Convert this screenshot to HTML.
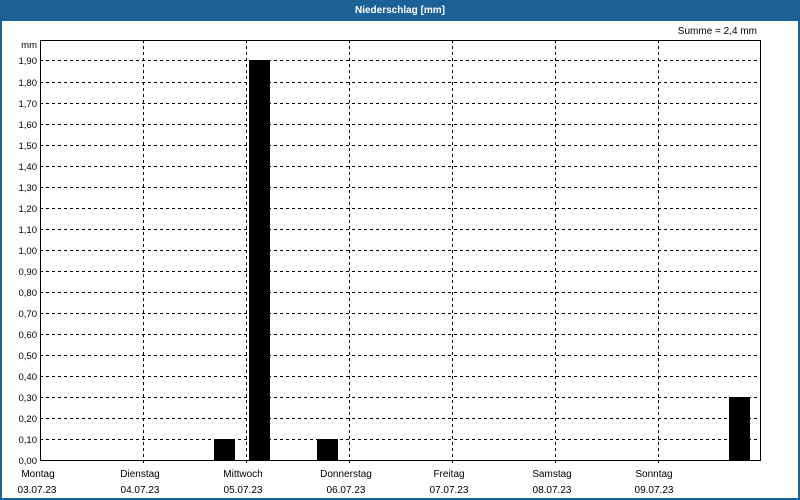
<!DOCTYPE html>
<html><head><meta charset="utf-8"><style>
html,body{margin:0;padding:0;background:#fff;}
body{width:800px;height:500px;overflow:hidden;position:relative;font-family:"Liberation Sans",sans-serif;}
</style></head><body>
<svg width="800" height="500" xmlns="http://www.w3.org/2000/svg" style="position:absolute;left:0;top:0">
<rect x="0" y="0" width="800" height="500" fill="#1d6297"/>
<rect x="2" y="21" width="796" height="477" fill="#fdfffd"/>
<text x="400" y="13" fill="#fff" font-size="10" font-weight="bold" text-anchor="middle" font-family="Liberation Sans, sans-serif">Niederschlag [mm]</text>
<text x="757" y="34" fill="#000" font-size="10" text-anchor="end" font-family="Liberation Sans, sans-serif">Summe = 2,4 mm</text>
<g stroke="#000" stroke-width="1" stroke-dasharray="3,3">
<line x1="40" x2="760" y1="439.5" y2="439.5"/>
<line x1="40" x2="760" y1="418.5" y2="418.5"/>
<line x1="40" x2="760" y1="397.5" y2="397.5"/>
<line x1="40" x2="760" y1="376.5" y2="376.5"/>
<line x1="40" x2="760" y1="355.5" y2="355.5"/>
<line x1="40" x2="760" y1="334.5" y2="334.5"/>
<line x1="40" x2="760" y1="313.5" y2="313.5"/>
<line x1="40" x2="760" y1="292.5" y2="292.5"/>
<line x1="40" x2="760" y1="271.5" y2="271.5"/>
<line x1="40" x2="760" y1="250.5" y2="250.5"/>
<line x1="40" x2="760" y1="229.5" y2="229.5"/>
<line x1="40" x2="760" y1="208.5" y2="208.5"/>
<line x1="40" x2="760" y1="187.5" y2="187.5"/>
<line x1="40" x2="760" y1="166.5" y2="166.5"/>
<line x1="40" x2="760" y1="145.5" y2="145.5"/>
<line x1="40" x2="760" y1="124.5" y2="124.5"/>
<line x1="40" x2="760" y1="103.5" y2="103.5"/>
<line x1="40" x2="760" y1="82.5" y2="82.5"/>
<line x1="40" x2="760" y1="60.5" y2="60.5"/>
<line y1="40" y2="463" x1="143.5" x2="143.5"/>
<line y1="40" y2="463" x1="246.5" x2="246.5"/>
<line y1="40" y2="463" x1="349.5" x2="349.5"/>
<line y1="40" y2="463" x1="452.5" x2="452.5"/>
<line y1="40" y2="463" x1="555.5" x2="555.5"/>
<line y1="40" y2="463" x1="658.5" x2="658.5"/>
</g>
<g fill="#000">
<rect x="214" y="439" width="21" height="21"/>
<rect x="249" y="60" width="21" height="400"/>
<rect x="317" y="439" width="21" height="21"/>
<rect x="729" y="397" width="21" height="63"/>
</g>
<path d="M40.5 40.5 H760.5 V460.5 H40.5 Z" fill="none" stroke="#000" stroke-width="1"/>
<g font-size="9.5" fill="#000" text-anchor="end" font-family="Liberation Sans, sans-serif">
<text x="37" y="48">mm</text>
<text x="37" y="464">0,00</text>
<text x="37" y="443">0,10</text>
<text x="37" y="422">0,20</text>
<text x="37" y="401">0,30</text>
<text x="37" y="380">0,40</text>
<text x="37" y="359">0,50</text>
<text x="37" y="338">0,60</text>
<text x="37" y="317">0,70</text>
<text x="37" y="296">0,80</text>
<text x="37" y="275">0,90</text>
<text x="37" y="254">1,00</text>
<text x="37" y="233">1,10</text>
<text x="37" y="212">1,20</text>
<text x="37" y="191">1,30</text>
<text x="37" y="170">1,40</text>
<text x="37" y="149">1,50</text>
<text x="37" y="128">1,60</text>
<text x="37" y="107">1,70</text>
<text x="37" y="86">1,80</text>
<text x="37" y="64">1,90</text>
</g>
<g font-size="10" fill="#000" text-anchor="middle" font-family="Liberation Sans, sans-serif">
<text x="38" y="477">Montag</text><text x="37" y="493">03.07.23</text>
<text x="140" y="477">Dienstag</text><text x="140" y="493">04.07.23</text>
<text x="243" y="477">Mittwoch</text><text x="243" y="493">05.07.23</text>
<text x="346" y="477">Donnerstag</text><text x="346" y="493">06.07.23</text>
<text x="449" y="477">Freitag</text><text x="449" y="493">07.07.23</text>
<text x="552" y="477">Samstag</text><text x="552" y="493">08.07.23</text>
<text x="654" y="477">Sonntag</text><text x="654" y="493">09.07.23</text>
</g>
</svg>
</body></html>
